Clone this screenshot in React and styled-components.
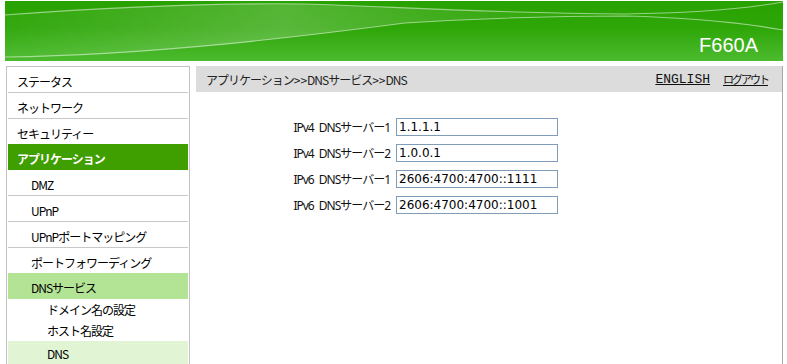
import styled, { createGlobalStyle } from 'styled-components';

const GlobalStyle = createGlobalStyle`
  html, body {
    margin: 0;
    background: #ffffff;
  }
  body {
    padding: 1px 4px 0 5px;
    font-family: "Noto Sans", "Noto Sans CJK JP", sans-serif;
    overflow: hidden;
  }
`;

const Header = styled.div`
  position: relative;
  height: 60px;
  background: linear-gradient(to bottom, #28a200 0%, #2ea608 45%, #4cbb2f 100%);
  display: flex;
  align-items: flex-end;
  justify-content: flex-end;
  padding: 0 25px 6px 0;
  box-sizing: border-box;
  overflow: hidden;
`;

const Wave = styled.svg`
  position: absolute;
  inset: 0;
  width: 100%;
  height: 100%;
`;

const Model = styled.div`
  position: relative;
  color: #ffffff;
  font-family: "Liberation Sans", Arial, sans-serif;
  font-size: 20px;
  line-height: 20px;
`;

const Body = styled.div`
  display: flex;
  gap: 6px;
  margin-top: 5px;
  align-items: flex-start;
`;

const Sidebar = styled.nav`
  width: 180px;
  height: 320px;
  margin-left: 1px;
  border: 1px solid #c3c3c3;
  padding: 0 1px;
`;

const rowHeight = ({ sub, tall }) => (tall ? 26 : sub === 2 ? 21 : 25);

const MenuItem = styled.div`
  height: ${(p) => rowHeight(p)}px;
  line-height: ${(p) => rowHeight(p) + (p.sub === 2 ? 0 : 4)}px;
  padding-left: ${({ sub }) => (sub === 2 ? '39px' : sub === 1 ? '23px' : '9px')};
  font-family: "Noto Sans CJK JP", sans-serif;
  font-size: 12px;
  letter-spacing: -1px;
  white-space: nowrap;
  overflow: hidden;
  color: ${({ active }) => (active ? '#ffffff' : '#000000')};
  font-weight: ${({ active }) => (active ? 'bold' : 'normal')};
  background: ${({ active, open, current }) =>
    active ? '#3f9e00' : open ? '#b3e395' : current ? '#e1f5d5' : 'transparent'};
  border-bottom: ${({ line }) => (line ? '1px solid #c8c8c8' : 'none')};
`;

const Main = styled.main`
  flex: 1;
  height: 320px;
  border-right: 1px solid #a8a8a8;
`;

const Crumbs = styled.div`
  height: 26px;
  background: #dcdcdc;
  display: flex;
  align-items: center;
  justify-content: space-between;
  padding: 0 14px 0 10px;
`;

const Path = styled.span`
  font-family: "Noto Sans CJK JP", sans-serif;
  font-size: 12px;
  letter-spacing: -1px;
  color: #222222;
`;

const Sep = styled.span`
  letter-spacing: 0;
`;

const Links = styled.div`
  display: flex;
  align-items: center;
  gap: 13px;
`;

const Link = styled.a`
  color: #111111;
  text-decoration: underline;
  font-family: ${({ mono }) => (mono ? '"Liberation Mono", monospace' : '"Noto Sans CJK JP", sans-serif')};
  font-size: ${({ mono }) => (mono ? '13px' : '11px')};
  letter-spacing: ${({ mono }) => (mono ? '0' : '-2px')};
  cursor: pointer;
`;

const Form = styled.div`
  display: grid;
  grid-template-columns: 194px 162px;
  column-gap: 6px;
  row-gap: 8px;
  margin-top: 26px;
  align-items: center;
`;

const Label = styled.label`
  text-align: right;
  font-size: 12px;
  letter-spacing: -1px;
  word-spacing: 3px;
  color: #111111;
  white-space: nowrap;
`;

const Field = styled.input`
  height: 18px;
  box-sizing: border-box;
  border: 1px solid #7f9db9;
  padding: 0 2px;
  margin: 0;
  font-family: "DejaVu Sans", Verdana, sans-serif;
  font-size: 12px;
  color: #000000;
  outline: none;
`;

const menu = [
  { text: 'ステータス', line: true },
  { text: 'ネットワーク', line: true },
  { text: 'セキュリティー' },
  { text: 'アプリケーション', active: true, tall: true },
  { text: 'DMZ', sub: 1, line: true },
  { text: 'UPnP', sub: 1, line: true },
  { text: 'UPnPポートマッピング', sub: 1, line: true },
  { text: 'ポートフォワーディング', sub: 1 },
  { text: 'DNSサービス', sub: 1, open: true, tall: true },
  { text: 'ドメイン名の設定', sub: 2 },
  { text: 'ホスト名設定', sub: 2 },
  { text: 'DNS', sub: 2, current: true, tall: true },
];

const servers = [
  ['IPv4 DNSサーバー1', '1.1.1.1'],
  ['IPv4 DNSサーバー2', '1.0.0.1'],
  ['IPv6 DNSサーバー1', '2606:4700:4700::1111'],
  ['IPv6 DNSサーバー2', '2606:4700:4700::1001'],
];

const App = () => {
  return (
    <>
      <GlobalStyle />
      <Header>
        <Wave viewBox="0 0 778 60" preserveAspectRatio="none">
          <defs>
            <linearGradient id="band" x1="0" y1="0" x2="1" y2="0">
              <stop offset="0" stopColor="#ffffff" stopOpacity="0.03" />
              <stop offset="0.45" stopColor="#ffffff" stopOpacity="0.2" />
              <stop offset="0.8" stopColor="#ffffff" stopOpacity="0.06" />
              <stop offset="1" stopColor="#ffffff" stopOpacity="0" />
            </linearGradient>
          </defs>
          <path
            d="M0,14 C120,5 220,2 300,3 C380,5 470,12 620,13 L620,15 C560,15 480,17 400,22 C300,35 150,54 0,56 Z"
            fill="url(#band)"
          />
          <path
            d="M0,14 C120,5 220,2 300,3 C380,5 470,12 620,13 C700,12 750,6 778,1"
            fill="none"
            stroke="#ffffff"
            strokeOpacity="0.5"
            strokeWidth="1.1"
          />
          <path
            d="M0,56 C150,54 300,35 400,22 C480,17 560,15 620,15 C700,17 750,24 778,29"
            fill="none"
            stroke="#ffffff"
            strokeOpacity="0.5"
            strokeWidth="1.1"
          />
        </Wave>
        <Model>F660A</Model>
      </Header>
      <Body>
        <Sidebar>
          {menu.map((m) => (
            <MenuItem key={m.text} {...m}>
              {m.text}
            </MenuItem>
          ))}
        </Sidebar>
        <Main>
          <Crumbs>
            <Path>
              アプリケーション<Sep>&gt;&gt;</Sep>DNSサービス<Sep>&gt;&gt;</Sep>DNS
            </Path>
            <Links>
              <Link mono>ENGLISH</Link>
              <Link>ログアウト</Link>
            </Links>
          </Crumbs>
          <Form>
            {servers.map(([label, value]) => [
              <Label key={label + 'l'}>{label}</Label>,
              <Field key={label + 'f'} defaultValue={value} />,
            ])}
          </Form>
        </Main>
      </Body>
    </>
  );
};

export default App;
